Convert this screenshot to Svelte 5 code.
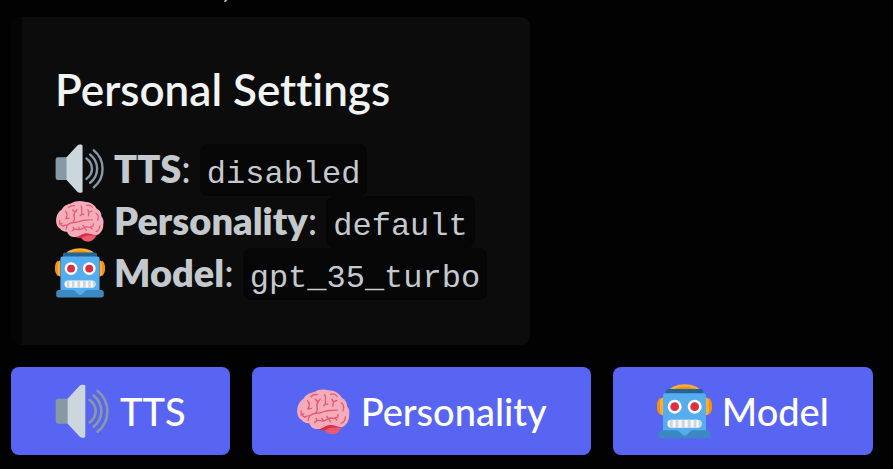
<script>
  const items = [
    { icon: 'speaker', label: 'TTS', value: 'disabled' },
    { icon: 'brain', label: 'Personality', value: 'default' },
    { icon: 'robot', label: 'Model', value: 'gpt_35_turbo' }
  ];
</script>

{#snippet emoji(name)}
  {#if name === 'speaker'}
    <svg class="emoji" viewBox="165 163 161 165" aria-hidden="true">
      <rect x="165" y="207" width="44" height="75" rx="8" fill="#8899a6" />
      <path fill="#ccd6dd" d="M201 207 L236 169 Q240 165 245 165 H249 Q254 165 254 170 V319 Q254 324 249 324 H245 Q240 324 236 320 L201 282 Z" />
      <g fill="none" stroke="#8899a6" stroke-width="8" stroke-linecap="round">
        <path d="M267 211 Q285 224 285 245 Q285 265 267 278" />
        <path d="M279 198 Q302 216 302 245 Q302 273 279 291" />
        <path d="M291 184 Q320 207 320 245 Q320 283 291 306" />
      </g>
    </svg>
  {:else if name === 'brain'}
    <svg class="emoji" viewBox="165 73 159 160" aria-hidden="true">
      <path fill="#ea596e" d="M246 202 C249 213 258 219 271 219 C285 218 294 207 298 197 L270 190 Z" />
      <path fill="#dd2e44" d="M231 205 C240 209 250 208 257 203 C270 197 285 201 297 199 L290 190 L250 190 Z" />
      <path fill="#f4abba" d="M168 153 C168 134 176 122 187 115 C192 104 205 99 217 96 C229 88 247 87 259 91 C276 91 293 101 298 114 C311 120 313 131 313 138 C320 146 321 155 319 163 C320 179 311 193 299 198 C285 199 273 190 258 193 C247 196 241 204 230 204 C219 205 209 202 203 187 C194 188 185 184 181 178 C172 173 168 163 168 153 Z" />
      <g fill="none" stroke="#ea596e" stroke-width="4" stroke-linecap="round" stroke-linejoin="round">
        <path d="M179 151 Q179 166 190 169 M179 163 L187 160" />
        <path d="M200 179 C200 167 207 160 222 158 C241 159 249 150 262 150 Q272 150 284 149 M207 165 Q195 165 190 169" />
        <path d="M198 122 Q204 127 203 136 L199 146 L209 144" />
        <path d="M221 117 Q224 124 230 123 L235 117 M230 123 Q222 132 226 141 Q228 149 223 157" />
        <path d="M248 104 Q252 112 250 121 V131 L245 136 M250 131 L257 132" />
        <path d="M270 117 Q270 124 275 124 L283 121 M275 124 Q270 131 272 137" />
        <path d="M208 110 Q214 102 227 104 M265 103 Q277 99 284 109 M296 128 Q307 135 301 151" />
        <path d="M219 185 Q224 178 233 179 Q247 184 254 176 Q264 170 274 173 L286 169 L287 162 M226 179 L223 173 M244 180 L240 173 M258 173 L254 167 M258 173 L265 183 M277 172 L283 178" />
        <path d="M296 187 Q307 184 308 169" />
      </g>
    </svg>
  {:else}
    <svg class="emoji" viewBox="172 70 165 165" aria-hidden="true">
      <ellipse cx="255" cy="94" rx="47" ry="23" fill="#ffac33" />
      <ellipse cx="255" cy="98" rx="38" ry="20" fill="#f4900c" />
      <path fill="#269" d="M198 100 V93 Q198 85 207 85 H302 Q311 85 311 93 V100 Z" />
      <path fill="#f4900c" d="M182 111 C168 120 168 153 182 162 Z M327 111 C341 120 341 153 327 162 Z" />
      <path fill="#ffac33" d="M190 164 Q181 164 181 155 V120 Q181 111 190 111 Z M319 111 Q328 111 328 120 V155 Q328 164 319 164 Z" />
      <path fill="#55acee" d="M190 105 Q190 98 197 98 H312 Q319 98 319 105 V229 H190 Z" />
      <path fill="#3b88c3" d="M176 227 V218 Q176 209 185 209 H234 L249 223 Q255 228 261 223 L276 209 H324 Q333 209 333 218 V227 Q333 233 327 233 H182 Q176 233 176 227 Z" />
      <g fill="#fff"><circle cx="225" cy="138" r="21" /><circle cx="285" cy="138" r="21" /></g>
      <g fill="#dd2e44"><circle cx="225" cy="138" r="13" /><circle cx="285" cy="138" r="13" /></g>
      <rect x="203" y="177" width="103" height="24" rx="12" fill="#f5f8fa" />
      <path fill="#ccd6dd" d="M211 179 Q215 177 219 177 v24 Q215 201 211 199z M228 177 h8 v24 h-8z M246 177 h9 v24 h-9z M264 177 h9 v24 h-9z M282 177 h8 v24 h-8z M297 178 Q306 181 306 189 Q306 197 297 200z" />
    </svg>
  {/if}
{/snippet}

<main>
  <p class="message">,</p>
  <article>
    <h1>Personal Settings</h1>
    <ul>
      {#each items as item}
        <li>
          {@render emoji(item.icon)}
          <span class="label"><strong>{item.label}</strong>:</span>
          <code>{item.value}</code>
        </li>
      {/each}
    </ul>
  </article>
  <div class="actions">
    {#each items as item}
      <button type="button">{@render emoji(item.icon)}<span>{item.label}</span></button>
    {/each}
  </div>
</main>

<style>
  :global(body) {
    margin: 0;
    background: #020202;
  }

  main {
    display: flow-root;
    padding: 0 11px 13px;
    color: #c4c9ce;
    font: 38px/52px Lato, "Noto Sans", sans-serif;
    font-variant-ligatures: none;
  }

  .message {
    height: 35px;
    margin: -18px 0 0;
    padding-left: 211px;
    line-height: 0;
  }

  article {
    box-sizing: border-box;
    width: fit-content;
    min-width: 519px;
    padding: 42px 43px 45px 33px;
    border-left: 11px solid #050505;
    border-radius: 9px;
    background: #0c0c0c;
  }

  h1 {
    margin: 0 0 25px;
    color: #f2f3f5;
    font-size: 44px;
    line-height: 60px;
    font-weight: 600;
  }

  ul {
    margin: 0;
    padding: 0;
    list-style: none;
  }

  li {
    display: flex;
    align-items: center;
    height: 52px;
    gap: 9px;
  }

  .emoji {
    flex: none;
    width: 50px;
    height: 50px;
  }

  li .emoji {
    padding-bottom: 2px;
  }

  .label {
    line-height: 48px;
    padding-bottom: 4px;
  }

  strong {
    font-weight: 800;
  }

  code {
    padding: 10px 7px 0;
    border-radius: 8px;
    background: #060606;
    font: 32px/42px "Liberation Mono", monospace;
  }

  .actions {
    display: flex;
    flex-wrap: wrap;
    gap: 22px;
    margin-top: 22px;
  }

  button {
    display: flex;
    align-items: center;
    gap: 10px;
    height: 88px;
    padding: 0 44px;
    border: 0;
    border-radius: 8px;
    background: #5865f2;
    color: #fff;
    font: 500 38px/52px Lato, "Noto Sans", sans-serif;
  }

  button .emoji {
    width: 55px;
    height: 55px;
  }
</style>
